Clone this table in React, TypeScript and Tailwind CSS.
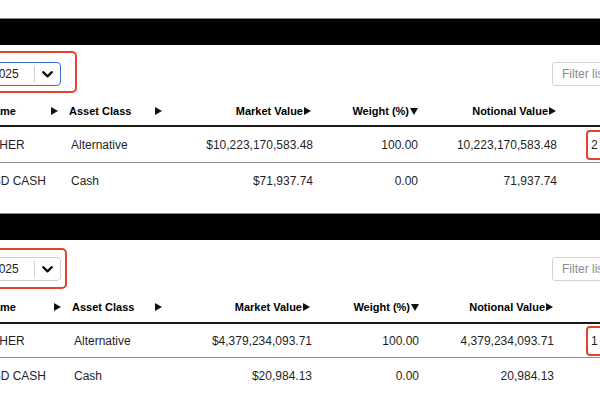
import React from "react";

type Row = { name: string; cls: string; mv: string; w: string; nv: string };

type Layout = {
  cols: string;
  barTop: string;
  boxMt: string;
  boxPt: string;
  boxPb: string;
  boxPr: string;
  filterMt: string;
  headPt: string;
  headH: string;
  row1H: string;
  selBorder: string;
  col6Pl: string;
  badge: string;
};

function Arrow() {
  return (
    <svg width="7" height="8" viewBox="0 0 7 8" className="inline-block shrink-0">
      <path d="M0 0 L7 4 L0 8 Z" fill="#111" />
    </svg>
  );
}

function Down() {
  return (
    <svg width="8" height="7" viewBox="0 0 8 7" className="inline-block shrink-0">
      <path d="M0 0 L8 0 L4 7 Z" fill="#111" />
    </svg>
  );
}

function Section({ rows, l }: { rows: Row[]; l: Layout }) {
  return (
    <div>
      <div className={`h-[27px] bg-black border-t border-[#8a8a8a] ${l.barTop}`} />

      {/* controls */}
      <div className="flex items-start">
        <div className={`-ml-[41px] border-2 border-[#e2432f] rounded-[5px] pl-[10px] ${l.boxMt} ${l.boxPt} ${l.boxPb} ${l.boxPr}`}>
          <div className={`w-[90px] h-[24px] flex items-center rounded-[4px] border ${l.selBorder} bg-white`}>
            <div className="flex-1 text-right pr-[19px] text-[12px] text-[#222] whitespace-nowrap overflow-hidden">
              30, 2025
            </div>
            <div className="w-px h-[16px] bg-[#cfcfcf]" />
            <div className="w-[25px] flex justify-center">
              <svg width="11" height="7" viewBox="0 0 11 7">
                <path d="M1.2 1.2 L5.5 5.3 L9.8 1.2" stroke="#111" strokeWidth="2.3" fill="none" strokeLinecap="round" strokeLinejoin="round" />
              </svg>
            </div>
          </div>
        </div>
        <div className={`ml-auto -mr-[60px] w-[108px] h-[24px] border border-[#d3d3d3] rounded-[3px] pl-[9px] flex items-center text-[12px] text-[#8a8a8a] ${l.filterMt}`}>
          Filter list
        </div>
      </div>

      {/* table */}
      <div className="-ml-[14px] w-[660px]">
        <div className={`grid ${l.cols} ${l.headH} ${l.headPt} items-center border-b-2 border-[#1a1a1a] text-[11px] font-bold text-black`}>
          <div className="flex items-center justify-between pr-[4px]">
            <span>Name</span>
            <Arrow />
          </div>
          <div className="flex items-center justify-between pl-[7px] pr-[3px]">
            <span>Asset Class</span>
            <Arrow />
          </div>
          <div className="flex items-center justify-end gap-[1px] pr-[2px]">
            <span>Market Value</span>
            <Arrow />
          </div>
          <div className="flex items-center justify-end gap-[1px]">
            <span>Weight (%)</span>
            <Down />
          </div>
          <div className="flex items-center justify-end gap-[1px] pr-[1px]">
            <span>Notional Value</span>
            <Arrow />
          </div>
          <div />
        </div>

        {rows.map((r, i) => (
          <div
            key={r.name}
            className={`grid ${l.cols} items-center text-[12px] text-[#1f1f1f] ${
              i === 0 ? `${l.row1H} border-b border-[#8c8c8c]` : "h-[36px]"
            }`}
          >
            <div className="whitespace-nowrap -ml-[2px]">{r.name}</div>
            <div className="pl-[9px]">{r.cls}</div>
            <div className="text-right">{r.mv}</div>
            <div className="text-right">{r.w}</div>
            <div className="text-right">{r.nv}</div>
            <div className={l.col6Pl}>
              {i === 0 && (
                <div className="w-[40px] h-[30px] border-2 border-[#e2432f] rounded-[4px] pl-[3px] flex items-center">
                  {l.badge}
                </div>
              )}
            </div>
          </div>
        ))}
      </div>
    </div>
  );
}

export default function App() {
  const top: Row[] = [
    { name: "ETHER", cls: "Alternative", mv: "$10,223,170,583.48", w: "100.00", nv: "10,223,170,583.48" },
    { name: "USD CASH", cls: "Cash", mv: "$71,937.74", w: "0.00", nv: "71,937.74" },
  ];
  const bottom: Row[] = [
    { name: "ETHER", cls: "Alternative", mv: "$4,379,234,093.71", w: "100.00", nv: "4,379,234,093.71" },
    { name: "USD CASH", cls: "Cash", mv: "$20,984.13", w: "0.00", nv: "20,984.13" },
  ];

  return (
    <div className="w-[600px] h-[400px] overflow-hidden bg-white font-['Liberation_Sans',Arial,sans-serif]">
      <Section
        rows={top}
        l={{
          cols: "grid-cols-[76px_103px_148px_105px_139px_1fr]",
          barTop: "mt-[18px]",
          boxMt: "mt-[6px]",
          boxPt: "pt-[9px]",
          boxPb: "pb-[5px]",
          boxPr: "pr-[14px]",
          filterMt: "mt-[17px]",
          headPt: "pt-[4px]",
          headH: "h-[34px]",
          row1H: "h-[36px]",
          selBorder: "border-[#3b6fd8]",
          col6Pl: "pl-[29px]",
          badge: "2",
        }}
      />
      <Section
        rows={bottom}
        l={{
          cols: "grid-cols-[79px_100px_147px_107px_135px_1fr]",
          barTop: "mt-[14px]",
          boxMt: "mt-[8px]",
          boxPt: "pt-[7px]",
          boxPb: "pb-[6px]",
          boxPr: "pr-[4px]",
          filterMt: "mt-[17px]",
          headPt: "pt-[3px]",
          headH: "h-[35px]",
          row1H: "h-[34px]",
          selBorder: "border-[#cfcfcf]",
          col6Pl: "pl-[32px]",
          badge: "1",
        }}
      />
    </div>
  );
}
